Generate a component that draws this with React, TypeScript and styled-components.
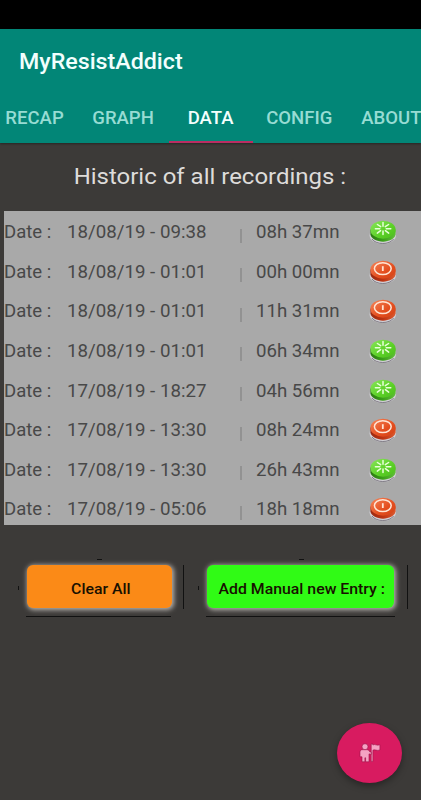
import React from 'react';
import styled, { createGlobalStyle } from 'styled-components';

const GlobalStyle = createGlobalStyle`
  * { box-sizing: border-box; }
  html, body { margin: 0; background: #3c3a38; }
  body { font-family: Roboto, sans-serif; overflow: hidden; }
`;

const Screen = styled.div`
  position: relative;
  display: flex;
  flex-direction: column;
  width: 421px;
  height: 800px;
  overflow: hidden;
  background: #3c3a38;
`;

const StatusBar = styled.div`
  flex: none;
  height: 29px;
  background: #000;
`;

const AppBar = styled.header`
  flex: none;
  height: 114px;
  background: #028677;
  box-shadow: 0 1px 2px rgba(0, 0, 0, 0.35);
`;

const Stretch = styled.span<{ $x?: number; $origin?: string }>`
  display: inline-block;
  white-space: pre;
  transform: scaleX(${(p) => p.$x ?? 1});
  transform-origin: ${(p) => p.$origin ?? 'left'} center;
`;

const Title = styled.h1`
  margin: 0;
  padding-left: 18.7px;
  height: 64px;
  line-height: 65px;
  font-size: 21.5px;
  font-weight: 500;
  color: #f2fffd;
`;

const Tabs = styled.nav`
  display: grid;
  grid-template-columns: 69px 100px 84px 93px 90px;
  height: 50px;
`;

const Tab = styled.div<{ $active?: boolean }>`
  display: flex;
  justify-content: center;
  height: 50px;
  line-height: 51px;
  font-size: 17.5px;
  font-weight: 500;
  color: ${(p) => (p.$active ? '#f4fffd' : '#97dcd3')};
  border-bottom: 2px solid ${(p) => (p.$active ? '#b92d63' : 'transparent')};

  &:nth-child(2) { padding-left: 8px; }
`;

const Heading = styled.h2`
  flex: none;
  display: flex;
  justify-content: center;
  margin: 0;
  padding-right: 1px;
  height: 68px;
  line-height: 66px;
  font-size: 22.5px;
  font-weight: 400;
  color: #dedcda;
`;

const List = styled.div`
  flex: none;
  height: 314px;
  margin-left: 4.4px;
  padding-top: 1.5px;
  overflow: hidden;
  background: #a9a9a9;
`;

const Row = styled.div`
  display: grid;
  grid-template-columns: 62.5px 172px 17px 112px 52.6px;
  align-items: center;
  height: 39.57px;
  font-size: 17.5px;
  color: #484848;
`;

const Divider = styled.span`
  width: 2px;
  height: 14px;
  margin-top: 7px;
  margin-left: 1px;
  background: #929292;
`;

const Actions = styled.div`
  flex: none;
  display: flex;
  gap: 14px;
  padding: 34px 0 0 18px;
`;

const Frame = styled.div<{ $w: number; $gap: number }>`
  position: relative;
  width: ${(p) => p.$w}px;
  height: 58px;
  padding: 6px ${(p) => p.$gap}px 7px 9px;
`;

const Action = styled.button<{ $bg: string }>`
  display: flex;
  align-items: center;
  justify-content: center;
  width: 100%;
  height: 43px;
  padding: 4px 0 0 3px;
  border: 0;
  border-radius: 6px;
  background: ${(p) => p.$bg};
  box-shadow: 1px 1px 5px 1px #b8b4b0;
  font: 500 14.8px Roboto, sans-serif;
  color: #181000;
`;

const Edge = styled.i<{ $side: 'top' | 'left' | 'right' | 'bottom' }>`
  position: absolute;
  background: #111;
  ${(p) =>
    ({
      top: 'top: 0; left: calc(50% - 4px); width: 5px; height: 1px;',
      left: 'top: 27px; left: 0; width: 1px; height: 4px;',
      right: 'top: 6px; right: 0; width: 1px; height: 44px;',
      bottom: 'top: 57px; left: 8px; right: 13px; height: 1px;',
    })[p.$side]}
`;

const Fab = styled.button`
  position: absolute;
  left: 337px;
  top: 723px;
  width: 65px;
  height: 60px;
  padding: 0;
  border: 0;
  border-radius: 50%;
  background: #d81b60;
  box-shadow: 0 3px 7px rgba(0, 0, 0, 0.35);
  display: flex;
  align-items: center;
  justify-content: center;
`;

const StateSvg = styled.svg`
  display: block;
  width: 30px;
  height: 26px;
`;

function StateIcon({ on }: { on: boolean }) {
  const id = on ? 'g' : 'r';
  return (
    <StateSvg viewBox="0 0 30 26">
      <defs>
        <linearGradient id={id} x1="0" y1="0" x2="1" y2="1">
          <stop offset="0" stopColor={on ? '#8ae65c' : '#f5865c'} />
          <stop offset="0.6" stopColor={on ? '#5bd026' : '#e44e1e'} />
          <stop offset="1" stopColor={on ? '#4cbb1d' : '#d34317'} />
        </linearGradient>
        <linearGradient id={id + 's'}>
          <stop offset="0" stopColor={on ? '#2c7912' : '#9a2a12'} />
          <stop offset="0.5" stopColor={on ? '#3ba01a' : '#bd3412'} />
          <stop offset="1" stopColor={on ? '#62bf3a' : '#dc5a2e'} />
        </linearGradient>
      </defs>
      <ellipse cx="14.8" cy="16.2" rx="13.2" ry="8.8" fill="#d2d0d6" />
      <path d="M4 20c4 6 17.6 6 21.6 0" fill="none" stroke="#77737c" strokeWidth="0.9" />
      <path d="M2.4 10.6v5c2 9.4 23.2 9.4 25.2 0v-5z" fill={`url(#${id}s)`} />
      <ellipse cx="15" cy="10.7" rx="12.6" ry="9" fill={`url(#${id})`} />
      {on ? (
        <path
          d="M15 3.6v3.6M15 12v3.6M7.4 9.7h4.4M18.2 9.7h4.6M9.4 5.5l3.3 2.2M17.4 11.7l3.3 2.4M20.6 5.5l-3.3 2.2M12.6 11.7l-3.3 2.4"
          stroke="#e9ffd9"
          strokeWidth="1.5"
          strokeLinecap="round"
        />
      ) : (
        <g fill="none" stroke="#ffe5d4">
          <ellipse cx="14.8" cy="9.6" rx="8.4" ry="5.9" strokeWidth="1.5" />
          <path d="M14.8 7.2v4.8" strokeWidth="1.8" />
        </g>
      )}
    </StateSvg>
  );
}

const tabs = ['RECAP', 'GRAPH', 'DATA', 'CONFIG', 'ABOUT'];

const rows: [string, string, boolean][] = [
  ['18/08/19 - 09:38', '08h 37mn', true],
  ['18/08/19 - 01:01', '00h 00mn', false],
  ['18/08/19 - 01:01', '11h 31mn', false],
  ['18/08/19 - 01:01', '06h 34mn', true],
  ['17/08/19 - 18:27', '04h 56mn', true],
  ['17/08/19 - 13:30', '08h 24mn', false],
  ['17/08/19 - 13:30', '26h 43mn', true],
  ['17/08/19 - 05:06', '18h 18mn', false],
];

type ActionButtonProps = { label: string; width: number; gap: number; bg: string };

function ActionButton({ label, width, gap, bg }: ActionButtonProps) {
  return (
    <Frame $w={width} $gap={gap}>
      <Edge $side="top" />
      <Edge $side="left" />
      <Edge $side="right" />
      <Edge $side="bottom" />
      <Action $bg={bg}>
        <Stretch $x={1.07} $origin="center">{label}</Stretch>
      </Action>
    </Frame>
  );
}

export default function App() {
  return (
    <>
      <GlobalStyle />
      <Screen>
        <StatusBar />
        <AppBar>
          <Title>
            <Stretch $x={1.08}>MyResistAddict</Stretch>
          </Title>
          <Tabs>
            {tabs.map((label) => (
              <Tab key={label} $active={label === 'DATA'}>
                <Stretch $x={1.06} $origin="center">{label}</Stretch>
              </Tab>
            ))}
          </Tabs>
        </AppBar>
        <Heading>
          <Stretch $x={1.065} $origin="center">Historic of all recordings :</Stretch>
        </Heading>
        <List>
          {rows.map(([date, time, on], i) => (
            <Row key={i}>
              <Stretch $x={1.06}>Date :</Stretch>
              <Stretch $x={1.068}>{date}</Stretch>
              <Divider />
              <Stretch $x={1.065}>{time}</Stretch>
              <StateIcon on={on} />
            </Row>
          ))}
        </List>
        <Actions>
          <ActionButton label="Clear All" width={166} gap={12} bg="#fb8a17" />
          <ActionButton label="Add Manual new Entry :" width={210} gap={14} bg="#30fb15" />
        </Actions>
        <Fab aria-label="Add flag">
          <svg width="22" height="20" viewBox="0 0 22 20" fill="#f5a3c4" stroke="#9b1248" strokeWidth="0.6">
            <path d="M12.2 1h1.7v1c2-1.4 3.5 1 7-.2v5.2c-3 1.2-5-.9-7 .2V18.4h-1.7z" />
            <path d="M3.2 6.7h4.8c1.7 0 2.4 1 2.6 2l2 .7v1.8l-2.6-.3v7.9H6.6v-4h-.7v4H3v-5H1V9.2c0-1.6.8-2.5 2.2-2.5z" />
            <circle cx="6" cy="3.7" r="3" />
          </svg>
        </Fab>
      </Screen>
    </>
  );
}
